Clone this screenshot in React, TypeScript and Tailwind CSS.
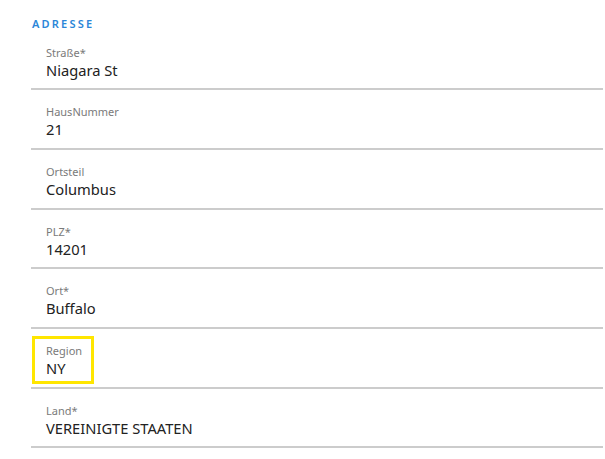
const fields = [
  { label: 'Straße*', value: 'Niagara St' },
  { label: 'HausNummer', value: '21' },
  { label: 'Ortsteil', value: 'Columbus' },
  { label: 'PLZ*', value: '14201' },
  { label: 'Ort*', value: 'Buffalo' },
  { label: 'Region', value: 'NY', highlight: true },
  { label: 'Land*', value: 'VEREINIGTE STAATEN' },
];

export default function App() {
  return (
    <div className="min-h-screen bg-white pl-[31px] pr-[2px] font-['Noto_Sans','Open_Sans',sans-serif]">
      <div className="h-[30.6px] pt-[17px] pl-[1px] text-[11px] leading-[14px] font-semibold tracking-[2.2px] text-[#2b86d8]">
        ADRESSE
      </div>
      {fields.map(field => (
        <div
          key={field.label}
          className="relative h-[59.7px] border-b-2 border-[#cccccc] pt-[15px] pl-[15px]"
        >
          {field.highlight && (
            <span className="absolute left-[1px] top-[7px] h-[48px] w-[62px] border-[3px] border-[#ffe600]" />
          )}
          <div className="text-[11px] leading-[14px] text-[#7a7a7a]">{field.label}</div>
          <div className="text-[14.7px] leading-[20px] text-[#222222]">{field.value}</div>
        </div>
      ))}
    </div>
  );
}
